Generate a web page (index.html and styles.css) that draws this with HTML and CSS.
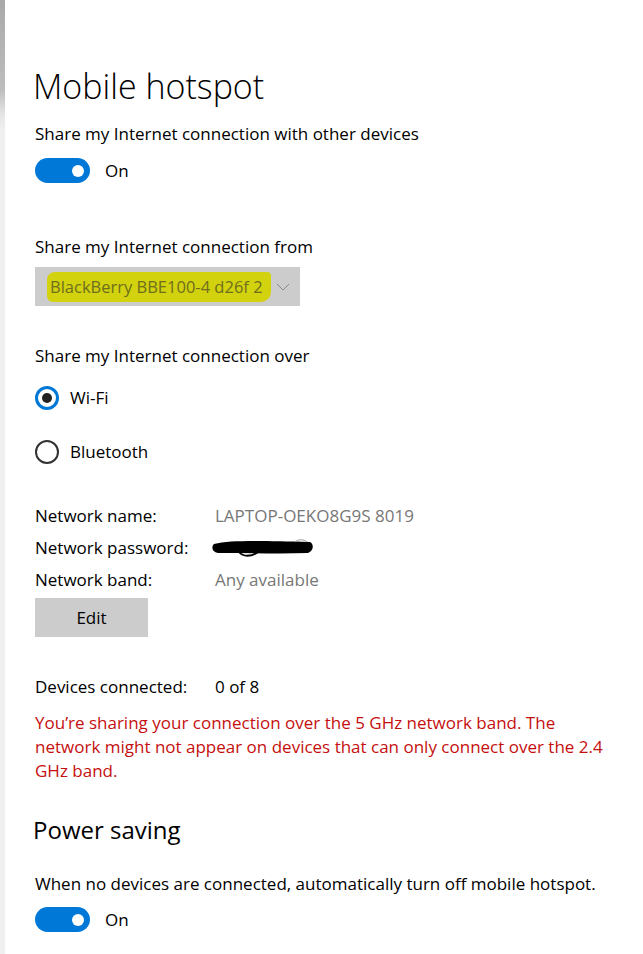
FILE: index.html
```html
<!DOCTYPE html>
<html lang="en">
<head>
  <meta charset="UTF-8">
  <title>Mobile hotspot</title>
  <link rel="stylesheet" href="styles.css">
</head>
<body>
  <div class="page">
    <div class="edge"></div>
    <main class="settings">
      <h1>Mobile hotspot</h1>

      <p class="label">Share my Internet connection with other devices</p>
      <div class="toggle-row">
        <span class="toggle"><span class="knob"></span></span>
        <span>On</span>
      </div>

      <p class="label from">Share my Internet connection from</p>
      <div class="select">
        <span class="marker">BlackBerry BBE100-4 d26f 2</span>
        <svg class="chevron" width="14" height="8" viewBox="0 0 14 8">
          <path d="M1 1 L7 7 L13 1" fill="none" stroke="#8a8a8a" stroke-width="1"/>
        </svg>
      </div>

      <p class="label over">Share my Internet connection over</p>
      <div class="radios">
        <div class="radio-row">
          <span class="radio checked"><span class="dot"></span></span>
          <span>Wi-Fi</span>
        </div>
        <div class="radio-row">
          <span class="radio"></span>
          <span>Bluetooth</span>
        </div>
      </div>

      <div class="info">
        <span>Network name:</span>
        <span class="value">LAPTOP-OEKO8G9S 8019</span>
        <span>Network password:</span>
        <span class="value">
          <svg class="scribble" width="104" height="18" viewBox="0 0 104 18">
            <path d="M3 5 C20 1 50 2 99 3 C103 5 103 12 97 14 C70 15 40 14 7 14 C1 13 0 8 3 5 Z" fill="#000"/>
            <path d="M28 13 C32 18 40 18 47 13" fill="none" stroke="#000" stroke-width="2"/>
            <path d="M84 3 C87 0 93 0 96 3" fill="none" stroke="#999" stroke-width="1"/>
          </svg>
        </span>
        <span>Network band:</span>
        <span class="value">Any available</span>
      </div>
      <button class="edit">Edit</button>

      <div class="info devices">
        <span>Devices connected:</span>
        <span>0 of 8</span>
      </div>

      <p class="warning">You’re sharing your connection over the 5 GHz network band. The network might not appear on devices that can only connect over the 2.4 GHz band.</p>

      <h2>Power saving</h2>
      <p class="label">When no devices are connected, automatically turn off mobile hotspot.</p>
      <div class="toggle-row last">
        <span class="toggle"><span class="knob"></span></span>
        <span>On</span>
      </div>
    </main>
  </div>
</body>
</html>
```

FILE: styles.css
```css
body {
  margin: 0;
  background: #fff;
  color: #000;
  font-family: 'Open Sans', sans-serif;
  font-size: 17px;
  line-height: 24px;
}
.page {
  display: flex;
  min-height: 954px;
}
.edge {
  width: 5px;
  flex-shrink: 0;
  background: linear-gradient(#a9a9a9 0, #bdbdbd 90px, #e6e6e6 115px, #f0f0f0 130px, #f0f0f0 100%);
}
.settings {
  padding: 0 0 0 30px;
  flex: 1;
}
h1 {
  font-weight: 300;
  font-size: 34px;
  line-height: 40px;
  margin: 66px 0 0 -2px;
}
h2 {
  font-weight: 400;
  font-size: 24px;
  line-height: 30px;
  margin: 32px 0 0 -2px;
}
.label {
  margin: 0;
}
h1 + .label {
  margin-top: 16px;
}
h2 + .label {
  margin-top: 27px;
}
.toggle-row {
  display: flex;
  align-items: center;
  gap: 15px;
  margin-top: 12px;
}
.toggle-row.last {
  margin-top: 11px;
}
.toggle {
  width: 55px;
  height: 25px;
  border-radius: 13px;
  background: #0078d7;
  display: flex;
  align-items: center;
  justify-content: flex-end;
  padding-right: 6px;
  box-sizing: border-box;
}
.knob {
  width: 12px;
  height: 12px;
  border-radius: 50%;
  background: #fff;
}
.from {
  margin-top: 52px;
}
.select {
  margin-top: 8px;
  width: 265px;
  height: 39px;
  background: #cccccc;
  display: flex;
  align-items: center;
  justify-content: space-between;
  padding: 0 10px 0 12px;
  box-sizing: border-box;
  white-space: nowrap;
}
.marker {
  background: #d2d20e;
  color: #6e6e1e;
  font-size: 16.5px;
  border-radius: 8px 4px 10px 6px;
  padding: 3px 8px 3px 3px;
}
.over {
  margin-top: 38px;
}
.radios {
  margin-top: 18px;
  display: flex;
  flex-direction: column;
  gap: 30px;
}
.radio-row {
  display: flex;
  align-items: center;
  gap: 11px;
}
.radio {
  width: 24px;
  height: 24px;
  border: 2px solid #333;
  border-radius: 50%;
  box-sizing: border-box;
  display: flex;
  align-items: center;
  justify-content: center;
}
.radio.checked {
  border: 3px solid #0078d7;
}
.dot {
  width: 10px;
  height: 10px;
  border-radius: 50%;
  background: #222;
}
.info {
  display: grid;
  grid-template-columns: 180px auto;
  row-gap: 8px;
  margin-top: 40px;
}
.value {
  color: #777;
}
.scribble {
  display: block;
  margin: 3px 0 0 -4px;
}
.edit {
  display: block;
  margin-top: 6px;
  width: 113px;
  height: 39px;
  border: none;
  background: #cccccc;
  font-family: inherit;
  font-size: 17px;
  color: #000;
  padding: 0;
}
.devices {
  margin-top: 38px;
}
.warning {
  color: #c50f0f;
  margin: 12px 0 0;
  max-width: 580px;
}
```
